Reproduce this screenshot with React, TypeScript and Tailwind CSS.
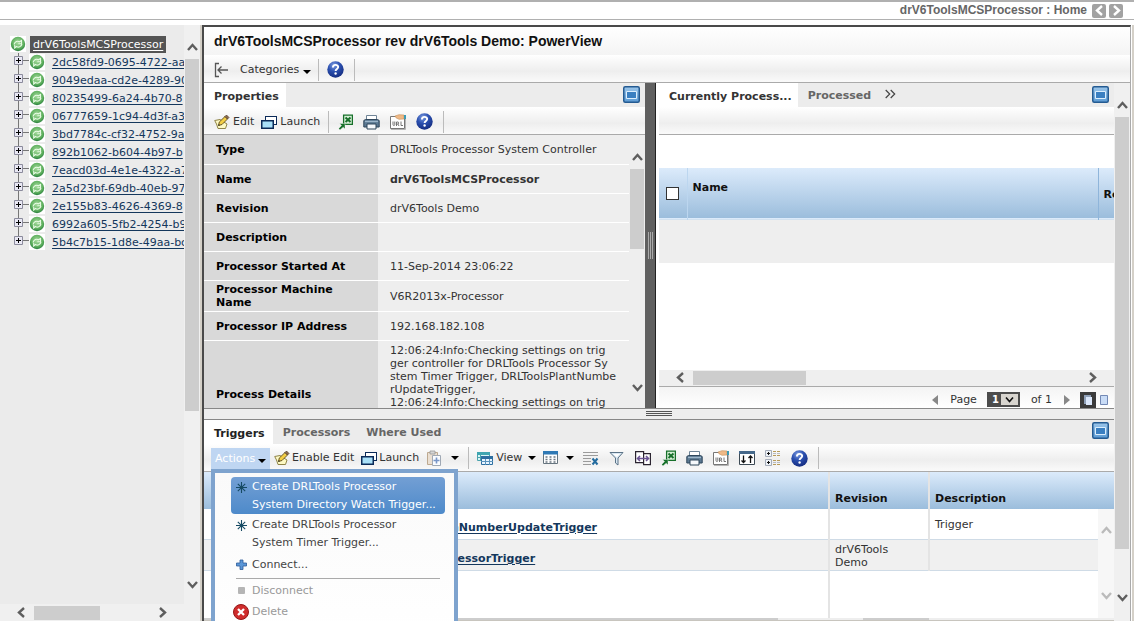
import React from "react";

type IconProps = { className?: string };

const Svg = ({ w = 16, h = 16, children, className = "" }: { w?: number; h?: number; children: React.ReactNode; className?: string }) => (
  <svg width={w} height={h} viewBox={`0 0 ${w} ${h}`} className={`block shrink-0 ${className}`} aria-hidden="true">
    {children}
  </svg>
);

const Caret = ({ className = "" }: IconProps) => (
  <Svg w={8} h={4} className={className}>
    <path d="M0 0h8L4 4z" fill="#000" />
  </Svg>
);

const HelpIcon = () => (
  <Svg w={17} h={17}>
    <defs>
      <radialGradient id="help" cx="0.4" cy="0.25" r="0.8">
        <stop offset="0" stopColor="#7d9ce0" />
        <stop offset="0.45" stopColor="#2b50b0" />
        <stop offset="1" stopColor="#12297c" />
      </radialGradient>
    </defs>
    <circle cx="8.5" cy="8.5" r="8.2" fill="url(#help)" />
    <path d="M5.900 6.400c0-3.400 5.300-3.300 5.300-.3 0 1.800-2.600 1.900-2.600 3.900" fill="none" stroke="#fff" strokeWidth="1.900" />
    <circle cx="8.6" cy="12.5" r="1.2" fill="#fff" />
  </Svg>
);

const EditIcon = () => (
  <Svg>
    <path d="M.7 6.500 6 5.500l7 4.500-1.500 4.500H4L2.500 10z" fill="#fdf9c4" stroke="#8f8448" />
    <path d="M4.500 11.500 5.300 8 11 2.500 13.500 5 8 10.500z" fill="#f3ce45" stroke="#5b4a1c" strokeWidth=".9" />
    <path d="M11 2.500 12.500 1 15 3.500 13.500 5z" fill="#8a6a4e" stroke="#4d3a2a" strokeWidth=".7" />
    <path d="m4.300 11.700.5-1.700 1.200 1.200z" fill="#222" />
  </Svg>
);

const LaunchIcon = () => (
  <Svg>
    <rect x="4.500" y="2.500" width="11" height="8" fill="#fff" stroke="#0b2a58" />
    <rect x=".75" y="6.750" width="11.500" height="7.500" fill="#a9e0f8" stroke="#0b2a58" strokeWidth="1.500" />
  </Svg>
);

const ExcelIcon = () => (
  <Svg w={15}>
    <path d="M5.600 1.100h8.800v9.300H5.600z" fill="#d8f0d8" stroke="#17702a" strokeWidth="1.300" />
    <path d="m7.500 3.500 5 4.500M12.500 3.500 7.500 8" stroke="#17702a" strokeWidth="2" />
    <path d="M1.500 9.500H7V15L5.200 13.200 2 15.900.7 14.400l2.800-2.900z" fill="#17702a" stroke="#fff" strokeWidth=".4" />
  </Svg>
);

const PrinterIcon = () => (
  <Svg w={17}>
    <path d="M3.500 1.500h10V6h-10z" fill="#fff" stroke="#6f8496" />
    <path d="M.8 6.500 2.500 5.500h12l1.700 1V13H.8z" fill="#5b7891" stroke="#2f465b" />
    <path d="M2 7.500h13" stroke="#9db6ca" strokeWidth="1.300" />
    <path d="M4 10h9v5H4z" fill="#f6f9fc" stroke="#2f465b" />
  </Svg>
);

const UrlIcon = () => (
  <Svg>
    <path d="M.5 2.500h14v12H.5z" fill="#fff" stroke="#777" />
    <path d="M1 15.500h14.500V4" fill="none" stroke="#b5b5b5" />
    <path d="M5 2 9 .7l5 .3v4l-5 .3-3-1.500z" fill="#efb987" stroke="#c58e58" strokeWidth=".6" />
    <path d="M14 1h2v4h-2z" fill="#3b9bb5" />
    <path d="M3 7.500v3q0 1 .9 1t.9-1v-3M6.500 12V8h1.300q.9 0 .9 1t-.9 1h-1m1 0 1.200 2M11 7.500v4h2" fill="none" stroke="#666" strokeWidth=".9" />
  </Svg>
);

const PasteIcon = () => (
  <Svg>
    <path d="M1.500 2.500h10v12h-10z" fill="#eadfd2" stroke="#bda990" />
    <path d="M4 1h5v3H4z" fill="#d5d5d5" stroke="#999" strokeWidth=".8" />
    <path d="M6.500 5.500h8v10h-8z" fill="#fafcff" stroke="#a0a9b5" />
    <path d="M10.500 7.500v6M7.500 10.500h6" stroke="#7896c8" strokeWidth="1.600" />
  </Svg>
);

const ViewIcon = () => (
  <Svg>
    <path d="M.5 2.500h12v8H.5z" fill="#d9f6f6" stroke="#4aa3ad" />
    <path d="M0 2h13v3H0z" fill="#3fa6b1" />
    <path d="M.5 7.500h4M3.500 5v5" stroke="#4aa3ad" />
    <path d="M4.500 6.500h11v8h-11z" fill="#e7f4ff" stroke="#2c6ea0" />
    <path d="M4 6h12v3H4z" fill="#2c6ea0" />
    <path d="M4 11.500h12M8.500 9v6M12.500 9v6" stroke="#5b94bd" />
  </Svg>
);

const TableIcon = () => (
  <Svg>
    <path d="M.5 1.500h14v12H.5z" fill="#fff" stroke="#66757f" />
    <path d="M0 1h15v3.500H0z" fill="#2f79b5" />
    <path d="M2.500 7h10M2.500 9.500h10M2.500 12h10" stroke="#6c7782" strokeWidth="1.500" strokeDasharray="2 2" />
  </Svg>
);

const ClearTextIcon = () => (
  <Svg>
    <path d="M0 2.500h15M0 5.500h15M0 8.500h8M0 11.500h8M0 14.500h8" stroke="#9b9b9b" />
    <path d="m9.500 8.500 5 6M14.500 8.500l-5 6" stroke="#246c9f" strokeWidth="2" />
  </Svg>
);

const FunnelIcon = () => (
  <Svg>
    <path d="M1 2.500h13L9 8v7L6.500 13V8z" fill="#dbe9f4" stroke="#5b7387" />
    <path d="M4 4h7L7.800 7z" fill="#fff" />
  </Svg>
);

const CompareIcon = () => (
  <Svg>
    <path d="M.6 1.600h8v11h-8zM8.600 3.600h6.800v11H8.600z" fill="#fff" stroke="#2b2430" strokeWidth="1.200" />
    <path d="M2.500 8.500h11M5 6 2.500 8.500 5 11M11 6l2.500 2.500L11 11" fill="none" stroke="#6b5493" strokeWidth="1.600" />
  </Svg>
);

const SortIcon = () => (
  <Svg>
    <path d="M.5 1.500h15v13H.5z" fill="#fff" stroke="#3d4a55" />
    <path d="M0 1h16v3H0z" fill="#45688a" />
    <path d="M4.500 5.500v7M2.500 10.500l2 2 2-2M11.500 13V6M9.500 8l2-2 2 2" fill="none" stroke="#111" strokeWidth="1.300" />
  </Svg>
);

const ListIcon = () => (
  <Svg>
    <path d="M.5.5h6v6h-6zM.5 9.500h6v6h-6z" fill="#eef2f7" stroke="#a5adba" />
    <path d="M2 3.500h3M3.500 2v3M2 12.500h3M3.500 11v3" stroke="#111" />
    <path d="M8 1.500h8M8 5.500h8M8 10.500h8M8 14.500h8" stroke="#b79b5b" strokeDasharray="3 1" />
    <path d="M8 3.500h8M8 12.500h8" stroke="#b7bcc4" strokeDasharray="3 1" />
  </Svg>
);

const OkIcon = () => (
  <Svg className="bg-white">
    <defs>
      <radialGradient id="ok" cx="0.5" cy="0.4" r="0.6">
        <stop offset="0" stopColor="#a9dda0" />
        <stop offset="0.7" stopColor="#5cae5c" />
        <stop offset="1" stopColor="#2b8040" />
      </radialGradient>
    </defs>
    <circle cx="8" cy="8" r="7.2" fill="url(#ok)" />
    <path d="M4 8.500c1-3 3.500-4 5.500-2.700L11.500 4.500v3.300H8.300M12 8c-.8 3-3.500 3.800-5.500 2.500L4.700 12V9" fill="none" stroke="#e6fae2" strokeWidth="1.100" />
  </Svg>
);

const PlusBox = ({ last = false }: { last?: boolean }) => (
  <Svg w={15} h={18}>
    <path d={last ? "M4.500 0v8M8 7.500h7" : "M4.500 0v18M8 7.500h7"} stroke="#777" />
    <path d="M.5 3.500h8v8h-8z" fill="#e9e8f4" stroke="#8b8b9c" />
    <path d="M2 7.500h5M4.500 5v5" stroke="#000" />
  </Svg>
);

const MaximizeIcon = () => (
  <Svg w={17} h={17}>
    <defs>
      <linearGradient id="max" x2="0" y2="1">
        <stop offset="0" stopColor="#9cc6ea" />
        <stop offset="1" stopColor="#5b9ad3" />
      </linearGradient>
    </defs>
    <rect x=".75" y=".75" width="15.500" height="15.500" rx="1.500" fill="url(#max)" stroke="#245b92" strokeWidth="1.500" />
    <path d="M3.500 5.500h10v7h-10z" fill="#3a7fc1" stroke="#dceefd" />
  </Svg>
);

const StarIcon = () => (
  <Svg w={11} h={11}>
    <path d="M5.500 0v11M0 5.500h11M1.800 1.800l7.400 7.400M9.200 1.800 1.800 9.200" stroke="#164a63" strokeWidth="1.100" />
  </Svg>
);

const AddIcon = () => (
  <Svg w={11} h={11}>
    <path d="M4 1h3v3h3.500v3H7v3.500H4V7H.5V4H4z" fill="#5b96d6" stroke="#2d5c99" strokeWidth=".8" />
  </Svg>
);

const DeleteIcon = () => (
  <Svg>
    <circle cx="8" cy="8" r="7.5" fill="#cf2c2c" stroke="#951616" />
    <path d="m5 5 6 6M11 5l-6 6" stroke="#fff" strokeWidth="2.300" />
  </Svg>
);

const CollapseIcon = () => (
  <Svg>
    <path d="M5 1.500H1.500v13H5M4 8h10M7.500 4.500 4 8l3.500 3.500" fill="none" stroke="#555" strokeWidth="1.300" />
  </Svg>
);

const chevrons = {
  up: "M1 8 5.500 3 10 8",
  down: "M1 3 5.500 8 10 3",
  left: "M8 1 3 5.500 8 10",
  right: "M3 1 8 5.500 3 10",
};
const Chevron = ({ dir, className = "text-[#5e5e5e]" }: { dir: keyof typeof chevrons; className?: string }) => (
  <Svg w={11} h={11} className={className}>
    <path d={chevrons[dir]} fill="none" stroke="currentColor" strokeWidth="2.400" />
  </Svg>
);

const Sep = () => <span className="h-[22px] w-px shrink-0 bg-[#bbb]" />;

const toolbar = "flex h-7 shrink-0 items-center border-b border-[#aaa] bg-linear-to-b from-white via-[#eeeeee] via-60% to-[#fafafa] pt-[2px]";
const headFill = "bg-linear-to-b from-[#dcebfb] to-[#9bbddc]";

const IconButton = ({ label, className = "", children }: { label: string; className?: string; children: React.ReactNode }) => (
  <button type="button" aria-label={label} className={`shrink-0 ${className}`}>
    {children}
  </button>
);

const nodes = [
  "2dc58fd9-0695-4722-aa",
  "9049edaa-cd2e-4289-90",
  "80235499-6a24-4b70-8",
  "06777659-1c94-4d3f-a3",
  "3bd7784c-cf32-4752-9a",
  "892b1062-b604-4b97-b",
  "7eacd03d-4e1e-4322-a7",
  "2a5d23bf-69db-40eb-97",
  "2e155b83-4626-4369-8",
  "6992a605-5fb2-4254-b9",
  "5b4c7b15-1d8e-49aa-bc",
];

function Sidebar() {
  return (
    <nav className="flex w-[200px] shrink-0 flex-col bg-[#ebebeb]">
      <div className="flex min-h-0 flex-1">
        <div className="min-w-0 flex-1 overflow-hidden pt-[10px]">
          <div className="flex h-[18px] items-center pl-[10px]">
            <OkIcon />
            <a href="#root-object" className="ml-1 bg-[#545454] px-[3px] leading-[17px] text-white underline underline-offset-2">
              drV6ToolsMCSProcessor
            </a>
          </div>
          <ul>
            {nodes.map((n, i) => (
              <li key={n} className="flex h-[18px] items-center pl-[14px]">
                <button type="button" aria-label="Expand">
                  <PlusBox last={i === nodes.length - 1} />
                </button>
                <OkIcon />
                <a href="#node" className="ml-[7px] pt-px whitespace-nowrap text-[#14375c] underline underline-offset-2">
                  {n}
                </a>
              </li>
            ))}
          </ul>
        </div>
        <div className="flex w-4 flex-col items-center bg-[#f0f0f0] pt-[17px] pb-[14px]">
          <Chevron dir="up" />
          <div className="mt-[6px] h-[352px] w-[14px] shrink bg-[#cdcdcd]" />
          <Chevron dir="down" className="mt-auto text-[#5e5e5e]" />
        </div>
      </div>
      <div className="flex h-[17px] items-center bg-[#f0f0f0] pl-4">
        <Chevron dir="left" />
        <div className="ml-[7px] h-[14px] w-[66px] bg-[#cdcdcd]" />
        <Chevron dir="right" className="ml-[57px] text-[#5e5e5e]" />
      </div>
    </nav>
  );
}

const props: { label: string; value: React.ReactNode; strong?: boolean; tall?: boolean }[] = [
  { label: "Type", value: "DRLTools Processor System Controller" },
  { label: "Name", value: "drV6ToolsMCSProcessor", strong: true },
  { label: "Revision", value: "drV6Tools Demo" },
  { label: "Description", value: "" },
  { label: "Processor Started At", value: "11-Sep-2014 23:06:22" },
  { label: "Processor Machine Name", value: "V6R2013x-Processor", tall: true },
  { label: "Processor IP Address", value: "192.168.182.108" },
];

const details = [
  "12:06:24:Info:Checking settings on trig",
  "ger controller for DRLTools Processor Sy",
  "stem Timer Trigger, DRLToolsPlantNumbe",
  "rUpdateTrigger,",
  "12:06:24:Info:Checking settings on trig",
];

function PropertiesPanel() {
  return (
    <section className="flex w-[441px] shrink-0 flex-col overflow-hidden bg-[#eeeeee]">
      <div className="flex h-6 shrink-0 bg-[#ececec]">
        <button type="button" className="bg-white pr-[7px] pl-[10px] pt-1 font-bold">Properties</button>
        <IconButton label="Maximize" className="mr-[5px] ml-auto pb-[2px]">
          <MaximizeIcon />
        </IconButton>
      </div>
      <div className={`${toolbar} pl-[10px]`}>
        <button type="button" className="flex items-center gap-[3px]"><EditIcon />Edit</button>
        <button type="button" className="ml-[7px] flex items-center gap-[3px]"><LaunchIcon />Launch</button>
        <span className="w-2" />
        <Sep />
        <div className="ml-[9px] flex gap-[10px]">
          <IconButton label="Export"><ExcelIcon /></IconButton>
          <IconButton label="Print"><PrinterIcon /></IconButton>
          <IconButton label="Page URL"><UrlIcon /></IconButton>
          <IconButton label="Help"><HelpIcon /></IconButton>
        </div>
        <span className="w-[10px]" />
        <Sep />
      </div>
      <div className="flex min-h-0 flex-1">
        <div className="min-w-0 flex-1 overflow-hidden">
          <table className="w-full table-fixed border-collapse text-left leading-[13px]">
            <colgroup>
              <col className="w-[174px]" />
              <col />
            </colgroup>
            <tbody>
              {props.map((p) => (
                <tr key={p.label} className={p.tall ? "h-[31px] border-b border-white" : "h-[29px] border-b border-white"}>
                  <th scope="row" className="bg-[#d9d9d9] pt-px pr-5 pl-3 text-black">{p.label}</th>
                  <td className={p.strong ? "pt-px pl-3 font-bold" : "pt-px pl-3"}>{p.value}</td>
                </tr>
              ))}
              <tr className="h-[108px]">
                <th scope="row" className="bg-[#d9d9d9] pl-3 text-black">Process Details</th>
                <td className="pt-[3px] pl-3 align-top whitespace-nowrap">
                  {details.map((d, i) => (
                    <div key={i}>{d}</div>
                  ))}
                </td>
              </tr>
            </tbody>
          </table>
        </div>
        <div className="flex w-4 flex-col items-center pt-[17px] pb-[15px]">
          <Chevron dir="up" />
          <div className="mt-[6px] h-20 w-[14px] bg-[#cdcdcd]" />
          <Chevron dir="down" className="mt-auto text-[#5e5e5e]" />
        </div>
      </div>
    </section>
  );
}

function ProcessPanel() {
  return (
    <section className="flex min-w-0 flex-1 flex-col overflow-hidden bg-white">
      <div className="flex h-6 shrink-0 bg-[#ececec] font-bold">
        <button type="button" className="bg-white pr-[6px] pl-[10px] pt-1">Currently Process...</button>
        <button type="button" className="pt-[2px] pl-[10px] text-[#666]">Processed</button>
        <button type="button" aria-label="More tabs" className="ml-[14px]">
          <Svg w={11} h={24}>
            <path d="m.7 7 4 4-4 4M5.700 7l4 4-4 4" fill="none" stroke="#444" strokeWidth="1.200" />
          </Svg>
        </button>
        <IconButton label="Maximize" className="mr-[5px] ml-auto pb-[2px]">
          <MaximizeIcon />
        </IconButton>
      </div>
      <div className={toolbar} />
      <div className="h-[33px] shrink-0" />
      <div className="min-h-0 flex-1 overflow-hidden">
        <table className="w-full table-fixed border-collapse text-left">
          <colgroup>
            <col className="w-[28px]" />
            <col />
            <col className="w-[16px]" />
          </colgroup>
          <thead>
            <tr className={`h-[51px] border-b border-[#d3e2f0] ${headFill}`}>
              <th className="border-r border-[#bcd6ef] pl-[7px]">
                <input type="checkbox" aria-label="Select all" className="block size-[13px] appearance-none border border-[#333] bg-white" />
              </th>
              <th className="border-r border-[#8fb5da] pb-[11px] pl-[5px] text-[#111]">Name</th>
              <th className="overflow-hidden pt-[3px] pl-[5px] whitespace-nowrap text-[#111]">Re</th>
            </tr>
          </thead>
          <tbody>
            <tr className="h-11 bg-[#eeeeee]">
              <td />
              <td />
              <td />
            </tr>
          </tbody>
        </table>
      </div>
      <div className="flex h-4 shrink-0 items-center bg-[#efefef] pr-4 pl-4">
        <Chevron dir="left" />
        <div className="ml-[7px] h-[14px] w-[113px] bg-[#cdcdcd]" />
        <Chevron dir="right" className="ml-auto text-[#5e5e5e]" />
      </div>
      <div className="flex h-[22px] shrink-0 items-center justify-end border-t border-[#aaa] bg-linear-to-b from-[#f4f4f4] to-white pr-[6px] pt-[5px]">
        <button type="button" aria-label="Previous page">
          <Svg w={6} h={10}><path d="M6 0v10L0 5z" fill="#888" /></Svg>
        </button>
        <label htmlFor="page" className="mr-[10px] ml-3">Page</label>
        <span className="relative">
          <select id="page" defaultValue="1" className="block h-[15px] w-[33px] appearance-none bg-[#4c4c4c] pl-[5px] text-[10px] leading-[15px] font-bold text-white">
            <option>1</option>
          </select>
          <Svg w={17} h={11} className="pointer-events-none absolute top-[2px] right-[2px] bg-[#d8d5cf]">
            <path d="m5 3.500 3.500 4L12 3.500" fill="none" stroke="#111" strokeWidth="1.600" />
          </Svg>
        </span>
        <span className="ml-[11px]">of 1</span>
        <button type="button" aria-label="Next page" className="ml-3">
          <Svg w={6} h={10}><path d="M0 0v10l6-5z" fill="#888" /></Svg>
        </button>
        <button type="button" aria-label="Multi page view" className="ml-[10px]">
          <Svg>
            <path d="M0 0h16v16H0z" fill="#3b3b3b" />
            <path d="M4 3h7v9H4z" fill="#8fa0b8" />
            <path d="M6 5h6v8H6z" fill="#dce8fb" />
          </Svg>
        </button>
        <button type="button" aria-label="Single page view" className="ml-1">
          <Svg w={8} h={10}><path d="M.5.5h7v9h-7z" fill="#c9dcf6" stroke="#7389b5" /></Svg>
        </button>
      </div>
    </section>
  );
}

const menuItem = "flex w-[214px] rounded-sm pl-1 text-left";
function ActionsMenu() {
  return (
    <div role="menu" className="absolute top-[49px] left-[7px] z-10 h-[180px] w-[247px] border-4 border-[#7ea3ce] bg-linear-to-b from-[#fafafa] to-white pt-1 pl-4">
      <button role="menuitem" type="button" className={`${menuItem} bg-linear-to-b from-[#739fd4] to-[#4d8aca] pt-px leading-[18px] text-white`}>
        <span className="mr-[5px] flex w-3 justify-center pt-1"><StarIcon /></span>
        <span className="whitespace-nowrap">Create DRLTools Processor<br />System Directory Watch Trigger...</span>
      </button>
      <button role="menuitem" type="button" className={`${menuItem} mt-[2px] leading-[18px] text-[#444]`}>
        <span className="mr-[5px] flex w-3 justify-center pt-1"><StarIcon /></span>
        <span>Create DRLTools Processor<br />System Timer Trigger...</span>
      </button>
      <button role="menuitem" type="button" className={`${menuItem} mt-1 items-center leading-[18px] text-[#444]`}>
        <span className="mr-[5px] flex w-3 justify-center"><AddIcon /></span>
        Connect...
      </button>
      <hr className="mt-1 mr-[14px] ml-[5px] border-[#aaa]" />
      <button role="menuitem" type="button" disabled className={`${menuItem} mt-[3px] items-center leading-[18px] text-[#999]`}>
        <span className="mr-[5px] flex w-3 justify-center">
          <span className="size-[7px] rounded-[1px] bg-[#b5b5b5]" />
        </span>
        Disconnect
      </button>
      <button role="menuitem" type="button" disabled className={`${menuItem} mt-[3px] items-center leading-[18px] text-[#999]`}>
        <span className="mr-[5px] flex w-3 justify-center"><DeleteIcon /></span>
        Delete
      </button>
    </div>
  );
}

function TriggersPanel() {
  return (
    <section className="relative flex min-h-0 flex-[201] flex-col border-b border-[#c8c5be] bg-white">
      <div className="flex h-6 shrink-0 bg-[#ececec] font-bold text-[#666]">
        <button type="button" className="bg-white pr-2 pl-[10px] pt-1 text-[#222]">Triggers</button>
        <button type="button" className="ml-[10px] pt-[2px]">Processors</button>
        <button type="button" className="ml-4 pt-[2px]">Where Used</button>
        <IconButton label="Maximize" className="mr-[5px] ml-auto pb-[2px]">
          <MaximizeIcon />
        </IconButton>
      </div>
      <div className={`${toolbar} pl-[7px]`}>
        <button type="button" aria-haspopup="menu" aria-expanded="true" className="mt-[2px] flex h-[23px] w-[59px] items-center bg-[#bfd6f2] pl-1 text-white">
          Actions
          <Caret className="ml-[3px] mt-1" />
        </button>
        <button type="button" className="ml-1 flex items-center gap-[2px] whitespace-nowrap"><EditIcon />Enable Edit</button>
        <button type="button" className="ml-[7px] flex items-center gap-[2px]"><LaunchIcon />Launch</button>
        <button type="button" aria-label="Paste" className="ml-[7px] flex items-center gap-[9px]"><PasteIcon /><Caret /></button>
        <span className="w-[9px]" />
        <Sep />
        <button type="button" className="ml-2 flex items-center gap-[3px]"><ViewIcon />View<Caret className="ml-[3px]" /></button>
        <button type="button" aria-label="Table" className="ml-[7px] flex items-center gap-[7px]"><TableIcon /><Caret /></button>
        <div className="ml-[9px] flex gap-[10px]">
          <IconButton label="Clear"><ClearTextIcon /></IconButton>
          <IconButton label="Filter"><FunnelIcon /></IconButton>
          <IconButton label="Compare"><CompareIcon /></IconButton>
          <IconButton label="Export"><ExcelIcon /></IconButton>
          <IconButton label="Print"><PrinterIcon /></IconButton>
          <IconButton label="Page URL"><UrlIcon /></IconButton>
          <IconButton label="Sort"><SortIcon /></IconButton>
          <IconButton label="Expand list"><ListIcon /></IconButton>
          <IconButton label="Help"><HelpIcon /></IconButton>
        </div>
        <span className="w-[10px]" />
        <Sep />
      </div>
      <ActionsMenu />
      <div className="relative min-h-0 flex-1 overflow-hidden">
        <table className="w-full table-fixed border-collapse text-left leading-[13px]">
          <colgroup>
            <col />
            <col className="w-[100px]" />
            <col className="w-[185px]" />
          </colgroup>
          <thead>
            <tr className={`h-[37px] text-[#111] ${headFill}`}>
              <th className="border-r-2 border-[#e4e4e4]"><span className="sr-only">Name</span></th>
              <th className="border-r-2 border-[#e4e4e4] pt-4 pl-[5px]">Revision</th>
              <th className="pt-4 pl-[5px]">Description</th>
            </tr>
          </thead>
          <tbody className="text-[#333]">
            <tr className="h-[31px] border-b border-[#cfdbe6]">
              <td className="border-r-2 border-[#e4e4e4] pt-[6px] pl-[247px]">
                <a href="#trigger-1" className="font-bold text-[#14375c] underline underline-offset-2">nNumberUpdateTrigger</a>
              </td>
              <td className="border-r-2 border-[#e4e4e4]" />
              <td className="pl-[5px]">Trigger</td>
            </tr>
            <tr className="h-[31px] border-b border-[#cfdbe6] bg-[#f0f0f0]">
              <td className="border-r-2 border-[#e4e4e4] pt-[6px] pl-[247px]">
                <a href="#trigger-2" className="font-bold text-[#14375c] underline underline-offset-2">cessorTrigger</a>
              </td>
              <td className="border-r-2 border-[#e4e4e4] pt-px pl-[5px]">drV6Tools<br />Demo</td>
              <td />
            </tr>
            <tr className="h-[60px]">
              <td className="border-r-2 border-[#e4e4e4]" />
              <td />
              <td />
            </tr>
          </tbody>
        </table>
        <div className="absolute top-[37px] right-0 bottom-0 flex w-4 flex-col items-center justify-between bg-[#f7f7f7] pt-4 pb-[17px]">
          <Chevron dir="up" className="text-[#bbb]" />
          <Chevron dir="down" className="text-[#bbb]" />
        </div>
      </div>
      <div className="flex h-[2px] shrink-0 bg-[#eee]">
        <div className="w-[574px] bg-[#cdcdcd]" />
        <div className="ml-[85px] w-[66px] bg-[#cdcdcd]" />
      </div>
    </section>
  );
}

export default function App() {
  return (
    <div className="flex h-screen flex-col overflow-hidden bg-white font-['DejaVu_Sans',Verdana,sans-serif] text-[11px] leading-4 text-[#333]">
      <header className="mb-[5px] flex h-5 shrink-0 items-center justify-end border-t-2 border-b border-[#b0b0b0] pr-[11px] font-['Liberation_Sans',Arial,sans-serif] text-xs font-bold text-[#666]">
        <span className="mr-[5px] pb-px">drV6ToolsMCSProcessor : Home</span>
        <button type="button" aria-label="Back" className="mr-[3px] flex size-[14px] items-center justify-center rounded-[2px] bg-[#a2a2a2]">
          <Chevron dir="left" className="text-white" />
        </button>
        <button type="button" aria-label="Forward" className="flex size-[14px] items-center justify-center rounded-[2px] bg-[#a2a2a2]">
          <Chevron dir="right" className="text-white" />
        </button>
      </header>
      <div className="flex min-h-0 flex-1">
        <Sidebar />
        <main className="flex min-w-0 flex-1 border-r-2 border-l-2 border-[#d4d0c8]">
          <div className="mr-px flex min-w-0 flex-1 flex-col border-t-2 border-r border-l-2 border-[#4a4a4a] border-r-[#aaa]">
            <h1 className="flex h-7 shrink-0 items-center bg-linear-to-b from-white to-[#f4f4f4] pl-[10px] font-['Liberation_Sans',Arial,sans-serif] text-sm font-bold text-[#111]">
              drV6ToolsMCSProcessor rev drV6Tools Demo: PowerView
            </h1>
            <div className={`${toolbar} pl-[10px]`}>
              <IconButton label="Collapse"><CollapseIcon /></IconButton>
              <button type="button" className="mr-[7px] ml-[10px] flex items-center">
                Categories
                <Caret className="mt-1 ml-1" />
              </button>
              <Sep />
              <span className="w-2" />
              <IconButton label="Help"><HelpIcon /></IconButton>
              <span className="w-[10px]" />
              <Sep />
            </div>
            <div className="flex min-h-0 flex-1">
              <div className="flex min-w-0 flex-1 flex-col">
                <div className="flex min-h-0 flex-[326] border-b border-[#888]">
                  <PropertiesPanel />
                  <div className="mr-[3px] flex w-[11px] shrink-0 items-center justify-center gap-px border-r border-[#222] bg-[#606060]">
                    <span className="h-[27px] w-px bg-[#aaa]" />
                    <span className="h-[27px] w-px bg-[#aaa]" />
                    <span className="h-[27px] w-px bg-[#aaa]" />
                  </div>
                  <ProcessPanel />
                </div>
                <div className="flex h-[11px] shrink-0 flex-col items-center justify-center gap-px border-b border-[#888] bg-[#eee]">
                  <span className="h-px w-[26px] bg-[#555]" />
                  <span className="h-px w-[26px] bg-[#555]" />
                  <span className="h-px w-[26px] bg-[#555]" />
                </div>
                <TriggersPanel />
              </div>
              <div className="flex w-4 shrink-0 flex-col items-center bg-[#f0f0f0] pt-[17px] pb-[18px]">
                <Chevron dir="up" />
                <div className="mt-[6px] h-[432px] w-[14px] bg-[#cdcdcd]" />
                <Chevron dir="down" className="mt-auto text-[#5e5e5e]" />
              </div>
            </div>
          </div>
        </main>
      </div>
    </div>
  );
}
